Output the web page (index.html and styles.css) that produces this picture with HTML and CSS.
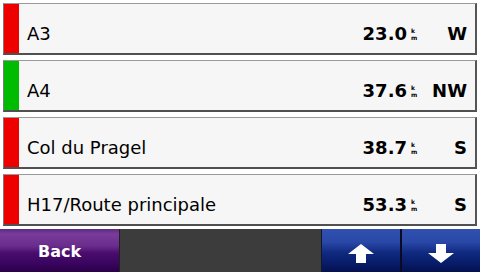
FILE: index.html
```html
<!DOCTYPE html>
<html>
<head>
<meta charset="utf-8">
<link rel="stylesheet" href="styles.css">
</head>
<body>
<div class="screen">
  <div class="list">
    <div class="row">
      <div class="bar red"></div>
      <div class="content">
        <span class="name">A3</span>
        <span class="dist">23.0</span>
        <span class="unit"><span>k</span><span>m</span></span>
        <span class="dir">W</span>
      </div>
    </div>
    <div class="row">
      <div class="bar green"></div>
      <div class="content">
        <span class="name">A4</span>
        <span class="dist">37.6</span>
        <span class="unit"><span>k</span><span>m</span></span>
        <span class="dir">NW</span>
      </div>
    </div>
    <div class="row">
      <div class="bar red"></div>
      <div class="content">
        <span class="name">Col du Pragel</span>
        <span class="dist">38.7</span>
        <span class="unit"><span>k</span><span>m</span></span>
        <span class="dir">S</span>
      </div>
    </div>
    <div class="row">
      <div class="bar red"></div>
      <div class="content">
        <span class="name">H17/Route principale</span>
        <span class="dist">53.3</span>
        <span class="unit"><span>k</span><span>m</span></span>
        <span class="dir">S</span>
      </div>
    </div>
  </div>
  <div class="toolbar">
    <div class="btn back">Back</div>
    <div class="spacer"></div>
    <div class="btn blue">
      <svg width="26" height="19" viewBox="0 0 26 19"><polygon points="13,0 26,10 18,10 18,19 8,19 8,10 0,10" fill="#fff"/></svg>
    </div>
    <div class="btn blue">
      <svg width="26" height="19" viewBox="0 0 26 19"><polygon points="8,0 18,0 18,9 26,9 13,19 0,9 8,9" fill="#fff"/></svg>
    </div>
  </div>
</div>
</body>
</html>
```

FILE: styles.css
```css
html, body {
  margin: 0;
  padding: 0;
  background: #ffffff;
}
.screen {
  width: 480px;
  height: 272px;
  display: flex;
  flex-direction: column;
  font-family: "DejaVu Sans", sans-serif;
  overflow: hidden;
}
.list {
  display: flex;
  flex-direction: column;
  gap: 5px;
  padding: 3px 3px 0 3px;
  height: 225px;
}
.row {
  height: 52px;
  box-sizing: border-box;
  display: flex;
  background: #f6f6f6;
  border-top: 1px solid #9a9a9a;
  border-left: 1px solid #7a7a7a;
  border-right: 2px solid #555555;
  border-bottom: 2px solid #505050;
}
.bar {
  width: 15px;
  flex: none;
}
.bar.red { background: #ee0000; }
.bar.green { background: #00bb00; }
.content {
  flex: 1;
  display: flex;
  align-items: center;
  padding: 9px 8px 0 8px;
  font-size: 18px;
  color: #000;
}
.name {
  flex: 1;
}
.dist {
  font-weight: bold;
}
.unit {
  display: flex;
  flex-direction: column;
  font-size: 6px;
  line-height: 7px;
  font-weight: bold;
  margin-left: 4px;
  margin-top: 1px;
  width: 6px;
  color: #000;
}
.dir {
  font-weight: bold;
  width: 50px;
  text-align: right;
}
.toolbar {
  margin-top: 3px;
  height: 44px;
  display: flex;
  background: #3c3c3c;
}
.btn {
  display: flex;
  align-items: center;
  justify-content: center;
  color: #fff;
  font-weight: bold;
  font-size: 16px;
}
.back {
  width: 120px;
  border-right: 1px solid #202020;
  padding-top: 2px;
  box-sizing: border-box;
  background: linear-gradient(to bottom, #5e2a80 0%, #7a3c9a 12%, #6a2c8c 40%, #4a0e6e 55%, #3a0460 80%, #2a0048 100%);
}
.spacer {
  flex: 1;
}
.blue {
  width: 79px;
  border-left: 1px solid #101830;
  padding-top: 6px;
  box-sizing: border-box;
  background: linear-gradient(to bottom, #3050b0 0%, #2a48a8 30%, #102a80 55%, #081c68 80%, #041050 100%);
}
.blue:last-child {
  width: 80px;
  border-left: 2px solid #0a0a20;
}
```
